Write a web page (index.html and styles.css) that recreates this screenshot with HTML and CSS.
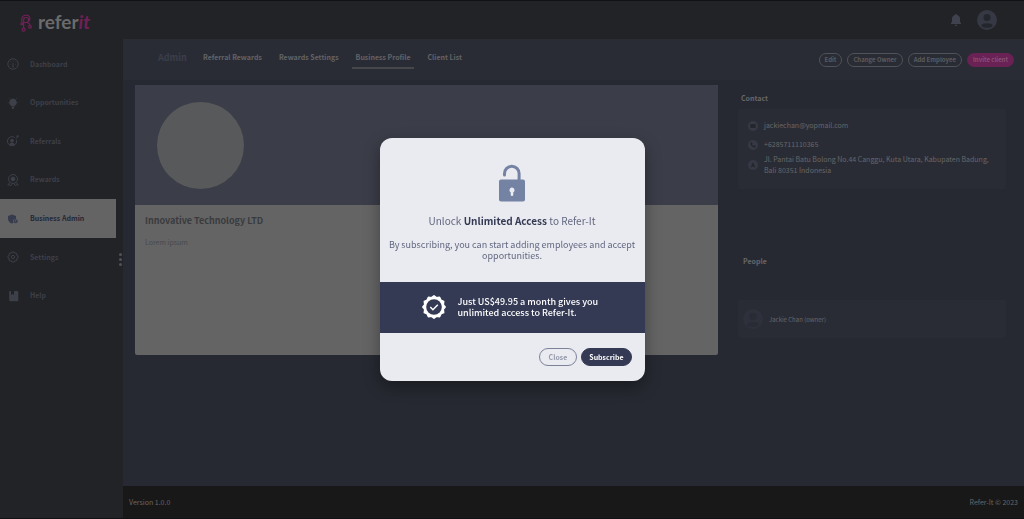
FILE: index.html
```html
<!DOCTYPE html>
<html lang="en">
<head>
<meta charset="utf-8">
<title>Refer-It Admin</title>
<link rel="stylesheet" href="styles.css">
</head>
<body>
<div class="app">
  <header class="topbar">
    <a class="logo" href="#">
      <svg class="logo-mark" viewBox="0 0 12 18" fill="none" stroke="currentColor" stroke-width="1.200"><path d="M2 8.800C1 5 2.200 1.200 6 1.200S10.500 4 9.300 7M3.600 14V5.800a2.500 2.500 0 1 1 2.600 2.700H3.600M6.500 8.500c2 0 3.200.8 3.400 2.700"/><circle cx="1.800" cy="9.800" r="1"/><circle cx="3.600" cy="15.700" r="1.500"/><circle cx="10" cy="12.700" r="1.400"/></svg>
      <span class="logo-text">refer<em>it</em></span>
    </a>
    <div class="top-actions">
      <button class="icon-button" aria-label="Notifications"><svg class="bell" viewBox="0 0 10 12"><path fill="currentColor" d="M5 0a1 1 0 0 1 1 1c2 .6 3 2 3 4v3l1 1v1H0V9l1-1V5c0-2 1-3.400 3-4a1 1 0 0 1 1-1zM3.700 10.700h2.600a1.300 1.300 0 0 1-2.600 0z"/></svg></button>
      <button class="icon-button" aria-label="Account"><svg class="avatar" viewBox="0 0 20 20"><circle class="disc" cx="10" cy="10" r="10"/><circle class="cut" cx="10" cy="7.500" r="3.500"/><ellipse class="cut" cx="10" cy="15.500" rx="5.500" ry="2.300"/></svg></button>
    </div>
  </header>

  <nav class="sidebar" aria-label="Main">
    <ul class="menu">
      <li><a href="#"><svg viewBox="0 0 12 12" fill="none" stroke="currentColor"><circle cx="6" cy="6" r="5.200"/><path d="M6 9V5M3 6.500l.6-.3M4 3.500l.4.600M6 2.500v.8M8 3.500l-.4.600M9 6.500l-.6-.3M5.200 8.800h1.600"/></svg>Dashboard</a></li>
      <li><a href="#"><svg viewBox="0 0 12 12" fill="currentColor"><path d="M6 1.500a3.800 3.800 0 0 1 2.200 6.900L7.500 9.500h-3l-.7-1.100A3.800 3.800 0 0 1 6 1.500zM4.700 10h2.600L6.700 12H5.300z"/><path stroke="currentColor" stroke-width=".6" d="M1.800 1 3 2.200M10.200 1 9 2.200M.6 5.500h1M10.400 5.500h1"/></svg>Opportunities</a></li>
      <li><a href="#"><svg viewBox="0 0 12 12" fill="none" stroke="currentColor"><path d="M7.500 2.300a4.600 4.600 0 1 0 2 2.700M9 3.800l1.200-1.600"/><circle cx="10.600" cy="1.300" r=".8" fill="currentColor"/><circle cx="5" cy="5.600" r="1.400" fill="currentColor"/><path fill="currentColor" d="M2.600 9.400c.5-1.800 4.300-1.800 4.800 0z"/></svg>Referrals</a></li>
      <li><a href="#"><svg viewBox="0 0 12 12" fill="none" stroke="currentColor"><circle cx="6" cy="5" r="4.500"/><circle cx="6" cy="5" r="1.900" fill="currentColor"/><path d="M2.700 8.500.8 11l2-.1.700 1 1.700-2.300M9.300 8.500l1.900 2.500-2-.1-.7 1-1.700-2.300"/></svg>Rewards</a></li>
      <li><a class="active" href="#" aria-current="page"><svg viewBox="0 0 12 12"><path fill="currentColor" d="m5 1.500 4 1.400v3H8A2.600 2.600 0 0 0 6.500 10L5 10.500C2.300 9.500 1 8 1 5.500V2.900z"/><circle cx="8.700" cy="8.300" r="2" fill="currentColor"/><circle class="active-dot" cx="8.700" cy="8" r=".7"/></svg>Business Admin</a></li>
      <li><a href="#"><svg viewBox="0 0 12 12" fill="none" stroke="currentColor" stroke-linejoin="round"><path d="M4.900 1h2.200l.5 1.200 1.300-.3 1.200 1.300-.4 1.200 1.300.6v2l-1.300.6.4 1.300-1.300 1.200-1.200-.4L7.100 11H4.900l-.5-1.300-1.300.4-1.200-1.200.4-1.300L1 7V5l1.300-.6-.4-1.200 1.200-1.300 1.300.3z"/><circle cx="6" cy="6" r="1.600"/></svg>Settings</a></li>
      <li><a href="#"><svg viewBox="0 0 12 12"><path fill="currentColor" d="M3 1h1v4l1.500-1L7 5V1h3.500a.8.800 0 0 1 .8.800v8.700a.8.800 0 0 1-.8.800H3a.8.800 0 0 1-.8-.8V1.800A.8.800 0 0 1 3 1z"/></svg>Help</a></li>
    </ul>
    <button class="grip" aria-label="Resize sidebar"><i></i><i></i><i></i></button>
  </nav>

  <main class="main">
    <div class="tabbar">
      <h1 class="section">Admin</h1>
      <nav class="tabs" aria-label="Admin">
        <a href="#">Referral Rewards</a>
        <a href="#">Rewards Settings</a>
        <a class="current" href="#">Business Profile</a>
        <a href="#">Client List</a>
      </nav>
      <div class="tab-actions">
        <button class="pill">Edit</button>
        <button class="pill">Change Owner</button>
        <button class="pill">Add Employee</button>
        <button class="pill pink">Invite client</button>
      </div>
    </div>
    <div class="content">
      <article class="profile">
        <div class="cover"><div class="photo"></div></div>
        <div class="about">
          <h2>Innovative Technology LTD</h2>
          <p>Lorem ipsum</p>
        </div>
      </article>
      <aside class="side">
        <h3>Contact</h3>
        <ul class="panel contact">
          <li><svg viewBox="0 0 10 10"><circle class="disc" cx="5" cy="5" r="5"/><rect class="cut" x="2.300" y="3" width="5.400" height="4" rx=".7"/></svg>jackiechan@yopmail.com</li>
          <li><svg viewBox="0 0 10 10"><circle class="disc" cx="5" cy="5" r="5"/><path class="cut" d="m3 2.300 1.200.2.400 1.300-.7.700 1.400 1.500.8-.7 1.300.5.200 1.100-.7.600C4.500 7.500 2.500 5.300 2.400 3z"/></svg>+6285711110365</li>
          <li><svg viewBox="0 0 10 10"><circle class="disc" cx="5" cy="5" r="5"/><path class="cut" d="m5 2 2.300 5.500L5 6.500l-2.300 1z"/></svg><span>Jl. Pantai Batu Bolong No.44 Canggu, Kuta Utara, Kabupaten Badung, Bali 80351 Indonesia</span></li>
        </ul>
        <h3 class="people-title">People</h3>
        <div class="panel person">
          <svg viewBox="0 0 20 20"><circle class="faint" cx="10" cy="10" r="10"/><circle class="faint-cut" cx="10" cy="7.500" r="3.700"/><ellipse class="faint-cut" cx="10" cy="15.500" rx="6" ry="2.500"/></svg>
          Jackie Chan (owner)
        </div>
      </aside>
    </div>
    <footer class="footer"><span>Version 1.0.0</span><span>Refer-It © 2023</span></footer>
  </main>
</div>

<div class="overlay">
  <section class="modal" role="dialog" aria-modal="true" aria-labelledby="modal-title">
    <div class="modal-intro">
      <svg class="lock" viewBox="0 0 28 38"><path d="M6.500 11V9.500a7.300 7.300 0 0 1 14.600 0V17" fill="none" stroke="currentColor" stroke-width="3" stroke-linecap="round"/><rect x="1" y="15.500" width="26" height="22" rx="2" fill="currentColor"/><path class="keyhole" d="M14 23.500a2.600 2.600 0 0 1 1.300 4.800v2.500a1.300 1.300 0 0 1-2.600 0v-2.500a2.600 2.600 0 0 1 1.300-4.800z"/></svg>
      <h2 id="modal-title">Unlock <strong>Unlimited Access</strong> to Refer-It</h2>
      <p>By subscribing, you can start adding employees and accept opportunities.</p>
    </div>
    <div class="offer">
      <svg class="seal" viewBox="0 0 24 24"><path fill="currentColor" stroke="currentColor" stroke-width="1.500" stroke-linejoin="round" d="m12 .8 2.400 1.900 3.200-.4 1.300 2.800 2.800 1.300-.4 3.200 1.900 2.400-1.900 2.400.4 3.200-2.800 1.300-1.300 2.800-3.200-.4L12 23.200l-2.400-1.900-3.200.4-1.300-2.800-2.800-1.300.4-3.200L.8 12l1.900-2.400-.4-3.200 2.800-1.300 1.300-2.800 3.200.4z"/><circle class="seal-core" cx="12" cy="12" r="7.800"/><path d="m8.300 12 2.600 2.700 4.900-5" fill="none" stroke="currentColor" stroke-width="1.500"/></svg>
      <p>Just US$49.95 a month gives you unlimited access to Refer-It.</p>
    </div>
    <div class="modal-actions">
      <button class="action">Close</button>
      <button class="action primary">Subscribe</button>
    </div>
  </section>
</div>
</body>
</html>
```
FILE: styles.css
```css
* { box-sizing: border-box; }
body {
  margin: 0;
  background: #222327;
  color: #66676a;
  font: 7px/11px "Noto Sans CJK SC", "Noto Sans", sans-serif;
}
h1, h2, h3, p, ul { margin: 0; padding: 0; }
ul { list-style: none; }
a { color: inherit; text-decoration: none; }
button { font: inherit; color: inherit; background: none; border: 0; padding: 0; }
svg { flex: none; display: block; }

.app {
  display: grid;
  grid-template: 38px 1fr / 123px 1fr;
  min-height: 100vh;
  border-top: 1px solid #111214;
  border-bottom: 1px solid #111214;
}
.topbar {
  grid-column: 1 / -1;
  display: flex;
  align-items: center;
  justify-content: space-between;
  padding: 0 27px 0 20px;
}
.logo { display: flex; align-items: center; gap: 6px; padding-top: 6px; }
.logo-mark { width: 12px; height: 18px; color: #6e2156; }
.logo-text { font: 700 19px/22px Lato, sans-serif; color: #6b6b6c; padding-bottom: 3px; }
.logo-text em { color: #6e2156; }
.top-actions { display: flex; align-items: center; gap: 16px; color: #40424e; }
.bell { width: 10px; height: 12px; }
.avatar { width: 20px; height: 20px; }
.disc { fill: #363844; }
.cut { fill: #24262d; }

.sidebar { position: relative; padding: 6px 7px 0 0; }
.menu { display: grid; grid-auto-rows: 1fr; height: 270px; }
.menu a {
  display: flex;
  align-items: center;
  gap: 11px;
  height: 100%;
  padding-left: 7px;
  color: #3d3f49;
  font-weight: 700;
}
.menu svg { width: 12px; height: 12px; }
.menu a.active { background: #646464; color: #252839; }
.menu .active svg { color: #373b4e; }
.active-dot { fill: #646464; }
.grip {
  position: absolute;
  right: 1px;
  top: 214px;
  display: grid;
  gap: 2px;
}
.grip i { width: 3px; height: 3px; border-radius: 50%; background: #505257; }

.main { display: flex; flex-direction: column; background: #262931; min-width: 0; }
.tabbar {
  display: flex;
  align-items: center;
  height: 41px;
  padding: 0 10px 0 35px;
  background: #2a2c35;
}
.section { width: 41px; padding-bottom: 4px; font-size: 9px; line-height: 12px; font-weight: 700; color: #3b3e4b; }
.tabs { display: flex; gap: 9px; font-weight: 700; color: #626366; }
.tabs a { padding: 2px 4px 4px; border-bottom: 2px solid transparent; white-space: nowrap; }
.tabs .current { border-color: #45474b; }
.tab-actions { display: flex; gap: 5px; margin-left: auto; }
.pill {
  height: 14px;
  padding: 0 5px;
  border: 1px solid #505257;
  border-radius: 7px;
  font-size: 6px;
  line-height: 12px;
  font-weight: 700;
  color: #5b5c60;
  white-space: nowrap;
}
.pill.pink { background: #6a2153; border-color: #6a2153; color: #8a5078; }

.content {
  flex: 1;
  display: grid;
  grid-template-columns: minmax(0, 583fr) minmax(0, 268fr);
  align-items: start;
  gap: 20px;
  padding: 5px 18px 0 12px;
}
.profile { background: #646464; border-radius: 2px; overflow: hidden; min-height: 270px; }
.cover { background: #3b3d48; padding: 17px 22px 16px; }
.photo { width: 87px; height: 87px; border-radius: 50%; background: #58595b; }
.about { padding: 10px; }
.about h2 { font-size: 9px; line-height: 12px; font-weight: 700; color: #3a3b3e; }
.about p { margin-top: 10px; color: #48494c; }

.side h3 { padding: 8px 3px 5px; font-size: 7px; line-height: 11px; font-weight: 700; }
.side .people-title { padding: 67px 5px 33px; }
.panel { background: #2a2c35; border-radius: 3px; }
.contact { display: grid; gap: 8px; padding: 11px 10px 13px; }
.contact li { display: flex; align-items: center; gap: 6px; }
.contact li:last-child { margin-top: -4px; }
.contact svg { width: 10px; height: 10px; }
.person { display: flex; align-items: center; gap: 6px; padding: 9px 5px; font-size: 6px; }
.person svg { width: 20px; height: 20px; }
.faint { fill: #2e303c; }
.faint-cut { fill: #2a2c35; }

.footer {
  display: flex;
  justify-content: space-between;
  align-items: center;
  height: 32px;
  padding: 0 6px;
  background: #181818;
}

.overlay { position: fixed; inset: 0; display: grid; place-items: center; }
.modal {
  width: 265px;
  overflow: hidden;
  border-radius: 12px;
  background: #eaebf0;
  color: #626780;
  box-shadow: 0 6px 16px rgba(0, 0, 0, 0.35);
}
.modal-intro { padding: 26px 6px 21px; text-align: center; }
.lock { width: 28px; height: 38px; margin: 0 auto; color: #7482a4; }
.keyhole { fill: #eaebf0; }
.modal h2 { margin-top: 11px; font-size: 10px; line-height: 16px; font-weight: 400; }
.modal h2 strong { color: #343954; }
.modal-intro p { margin-top: 10px; font-size: 9px; }
.offer {
  display: flex;
  align-items: center;
  gap: 12px;
  padding: 13px 42px 14px;
  background: #343954;
  color: #fff;
  font-size: 9px;
  font-weight: 500;
}
.seal { width: 24px; height: 24px; }
.seal-core { fill: #343954; }
.modal-actions { display: flex; justify-content: flex-end; gap: 4px; padding: 15px 13px; }
.action {
  height: 18px;
  padding: 0 9px;
  border: 1px solid #7d8299;
  border-radius: 9px;
  font-size: 7px;
  line-height: 16px;
  font-weight: 700;
  color: #9598a9;
}
.action.primary { padding: 0 7px; background: #343954; border-color: #343954; color: #fff; }
```
